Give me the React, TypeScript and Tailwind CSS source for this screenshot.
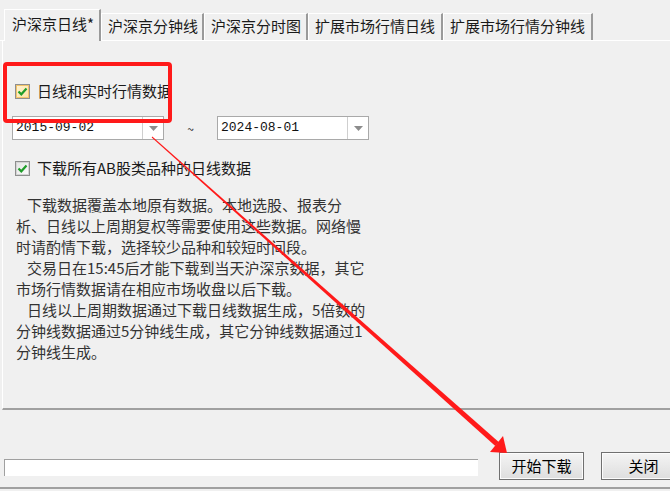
import React from "react";

const tabs = [
  { label: "沪深京日线*", w: "w-[97px]", active: true },
  { label: "沪深京分钟线", w: "w-[103px]" },
  { label: "沪深京分时图", w: "w-[104px]" },
  { label: "扩展市场行情日线", w: "w-[135px]" },
  { label: "扩展市场行情分钟线", w: "w-[150px]" },
];

const lines: { text: string; indent?: boolean }[] = [
  { text: "下载数据覆盖本地原有数据。本地选股、报表分", indent: true },
  { text: "析、日线以上周期复权等需要使用这些数据。网络慢" },
  { text: "时请酌情下载，选择较少品种和较短时间段。" },
  { text: "交易日在15:45后才能下载到当天沪深京数据，其它", indent: true },
  { text: "市场行情数据请在相应市场收盘以后下载。" },
  { text: "日线以上周期数据通过下载日线数据生成，5倍数的", indent: true },
  { text: "分钟线数据通过5分钟线生成，其它分钟线数据通过1" },
  { text: "分钟线生成。" },
];

function Check({ hot }: { hot?: boolean }) {
  return (
    <div className="flex h-[15px] w-[15px] shrink-0 items-center justify-center border border-[#8e8f8f] bg-white">
      <div
        className={
          hot
            ? "flex h-[13px] w-[13px] items-center justify-center border border-[#f3c46a] bg-gradient-to-br from-[#fff3d0] to-[#fde3a6]"
            : "flex h-[13px] w-[13px] items-center justify-center border border-[#d4d4d4] bg-gradient-to-br from-[#e6e6e6] to-[#fafafa]"
        }
      >
        <svg width="11" height="11" viewBox="0 0 11 11">
          <path d="M1.5 5.5 L4.3 8.3 L9.5 2.5" fill="none" stroke="#1f9d2a" strokeWidth="2.2" />
        </svg>
      </div>
    </div>
  );
}

function DateBox({ value, w }: { value: string; w: string }) {
  return (
    <div className={`flex h-[24px] ${w} shrink-0 border border-[#a9a9a9] bg-white`}>
      <div className="flex flex-1 items-center pl-[3px] font-['Liberation_Mono',monospace] text-[13px] text-[#111]">
        {value}
      </div>
      <div className="flex w-[21px] items-center justify-center border-l border-[#cfcfcf]">
        <svg width="9" height="5" viewBox="0 0 9 5">
          <path d="M0 0 H9 L4.5 5 Z" fill="#8c8c8c" />
        </svg>
      </div>
    </div>
  );
}

const btn =
  "h-[28px] w-[85px] shrink-0 border border-[#707070] bg-gradient-to-b from-[#f4f4f4] to-[#dedede] text-[15px] leading-[24px] text-black shadow-[inset_0_0_0_1px_#fcfcfc]";

export default function App() {
  return (
    <div className="relative h-[491px] w-[670px] overflow-hidden bg-[#f0f0f0] font-['Noto_Sans_CJK_SC',sans-serif] text-[15px] text-[#1a1a1a]">
      {/* tab strip */}
      <div className="flex h-[41px] items-end border-b border-white pl-[4px]">
        {tabs.map((t) =>
          t.active ? (
            <div
              key={t.label}
              className={`relative z-10 -mb-px h-[32px] ${t.w} shrink-0 border-l border-t border-white border-r-2 border-r-[#9a9a9a] bg-[#f0f0f0] pl-[7px] pt-[3px] leading-[22px] whitespace-nowrap`}
            >
              {t.label}
            </div>
          ) : (
            <div
              key={t.label}
              className={`h-[27px] ${t.w} shrink-0 border-l border-t border-white border-r-2 border-r-[#9a9a9a] pl-[6px] pt-[1px] leading-[22px] whitespace-nowrap`}
            >
              {t.label}
            </div>
          )
        )}
      </div>

      {/* panel */}
      <div className="ml-[2px] flex h-[369px] flex-col border-b-2 border-l border-b-[#a0a0a0] border-l-white">
        <div className="ml-[12px] mt-[40px] flex h-[20px] items-center gap-[7px]">
          <Check hot />
          <span className="leading-[20px]">日线和实时行情数据</span>
        </div>

        <div className="ml-[9px] mt-[15px] flex items-center">
          <DateBox value="2015-09-02" w="w-[152px]" />
          <span className="w-[53px] pt-[2px] text-center text-[12px] text-[#222]">~</span>
          <DateBox value="2024-08-01" w="w-[152px]" />
        </div>

        <div className="ml-[12px] mt-[18px] flex h-[20px] items-center gap-[7px]">
          <Check />
          <span className="leading-[20px]">下载所有AB股类品种的日线数据</span>
        </div>

        <div className="ml-[13px] mt-[16px] leading-[21px] text-[#333]">
          {lines.map((l) => (
            <div key={l.text} className={l.indent ? "pl-[11px] whitespace-nowrap" : "whitespace-nowrap"}>
              {l.text}
            </div>
          ))}
        </div>
      </div>

      {/* footer */}
      <div className="flex h-[79px] items-start border-b-2 border-[#a0a0a0] pt-[42px]">
        <div className="ml-[4px] mt-[7px] h-[17px] w-[474px] shrink-0 border-l border-t border-[#a0a0a0] bg-white" />
        <button className={`ml-[21px] ${btn}`}>开始下载</button>
        <button className={`ml-[17px] ${btn}`}>关闭</button>
      </div>

      {/* annotation overlay */}
      <div className="pointer-events-none absolute left-[3px] top-[62px] h-[61px] w-[169px] rounded-[4px] border-4 border-[#ff1a1a]" />
      <svg className="pointer-events-none absolute left-0 top-0" width="670" height="491" viewBox="0 0 670 491">
        <polygon points="152.3,136.6 151.7,137.4 495.3,445.9 498.7,442.1" fill="#ff1a1a" />
        <polygon points="507,453 490,452 503,436" fill="#ff1a1a" />
      </svg>
    </div>
  );
}
